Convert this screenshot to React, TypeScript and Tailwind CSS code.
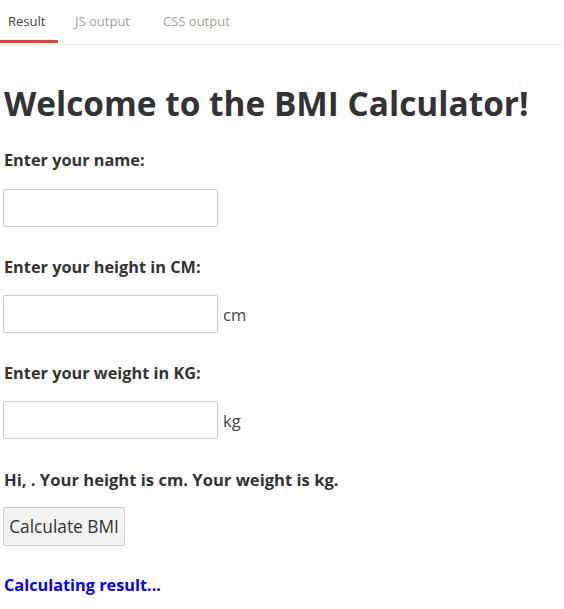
export default function App() {
  const font = { fontFamily: '"Open Sans", "Noto Sans", sans-serif' };
  return (
    <div className="min-h-screen w-[564px] bg-white text-[#333]" style={font}>
      <div className="flex h-[45px] items-stretch border-b border-[#eee] text-[13px]">
        <div className="relative flex w-[58px] items-center pl-[8px] text-[#444]">
          Result
          <span className="absolute bottom-[1px] left-0 h-[3px] w-[58px] bg-[#fc3c1e]" />
        </div>
        <div className="ml-[17px] flex items-center text-[#9aa3ad]">JS output</div>
        <div className="ml-[33px] flex items-center text-[#a89f97]">CSS output</div>
      </div>

      <div className="flex flex-col items-start pl-[4px]">
        <h1 className="mt-[37px] whitespace-nowrap text-[33.4px] leading-[43px] font-bold">Welcome to the BMI Calculator!</h1>

        <label className="mt-[23px] text-[16.3px] leading-[24px] font-bold">Enter your name:</label>
        <input className="-ml-[1px] mt-[17px] h-[38px] w-[215px] rounded-[2px] border border-[#ccc]" />

        <label className="mt-[28px] text-[16.3px] leading-[24px] font-bold">Enter your height in CM:</label>
        <div className="-ml-[1px] mt-[16px] flex items-center">
          <input className="h-[38px] w-[215px] rounded-[2px] border border-[#ccc]" />
          <span className="ml-[5px] mt-[3px] text-[16.5px] text-[#444]">cm</span>
        </div>

        <label className="mt-[28px] text-[16.3px] leading-[24px] font-bold">Enter your weight in KG:</label>
        <div className="-ml-[1px] mt-[16px] flex items-center">
          <input className="h-[38px] w-[215px] rounded-[2px] border border-[#ccc]" />
          <span className="ml-[5px] mt-[3px] text-[16.5px] text-[#444]">kg</span>
        </div>

        <p className="mt-[29px] whitespace-nowrap text-[16.6px] leading-[24px] font-bold">Hi, . Your height is cm. Your weight is kg.</p>

        <button className="-ml-[1px] mt-[15px] h-[39px] w-[122px] rounded-[2px] border border-[#ccc] bg-[#f3f3f3] text-[17.3px] text-[#333]">
          Calculate BMI
        </button>

        <p className="mt-[27px] text-[16.3px] leading-[24px] font-bold text-[#0000ff]">Calculating result...</p>
      </div>
    </div>
  );
}
